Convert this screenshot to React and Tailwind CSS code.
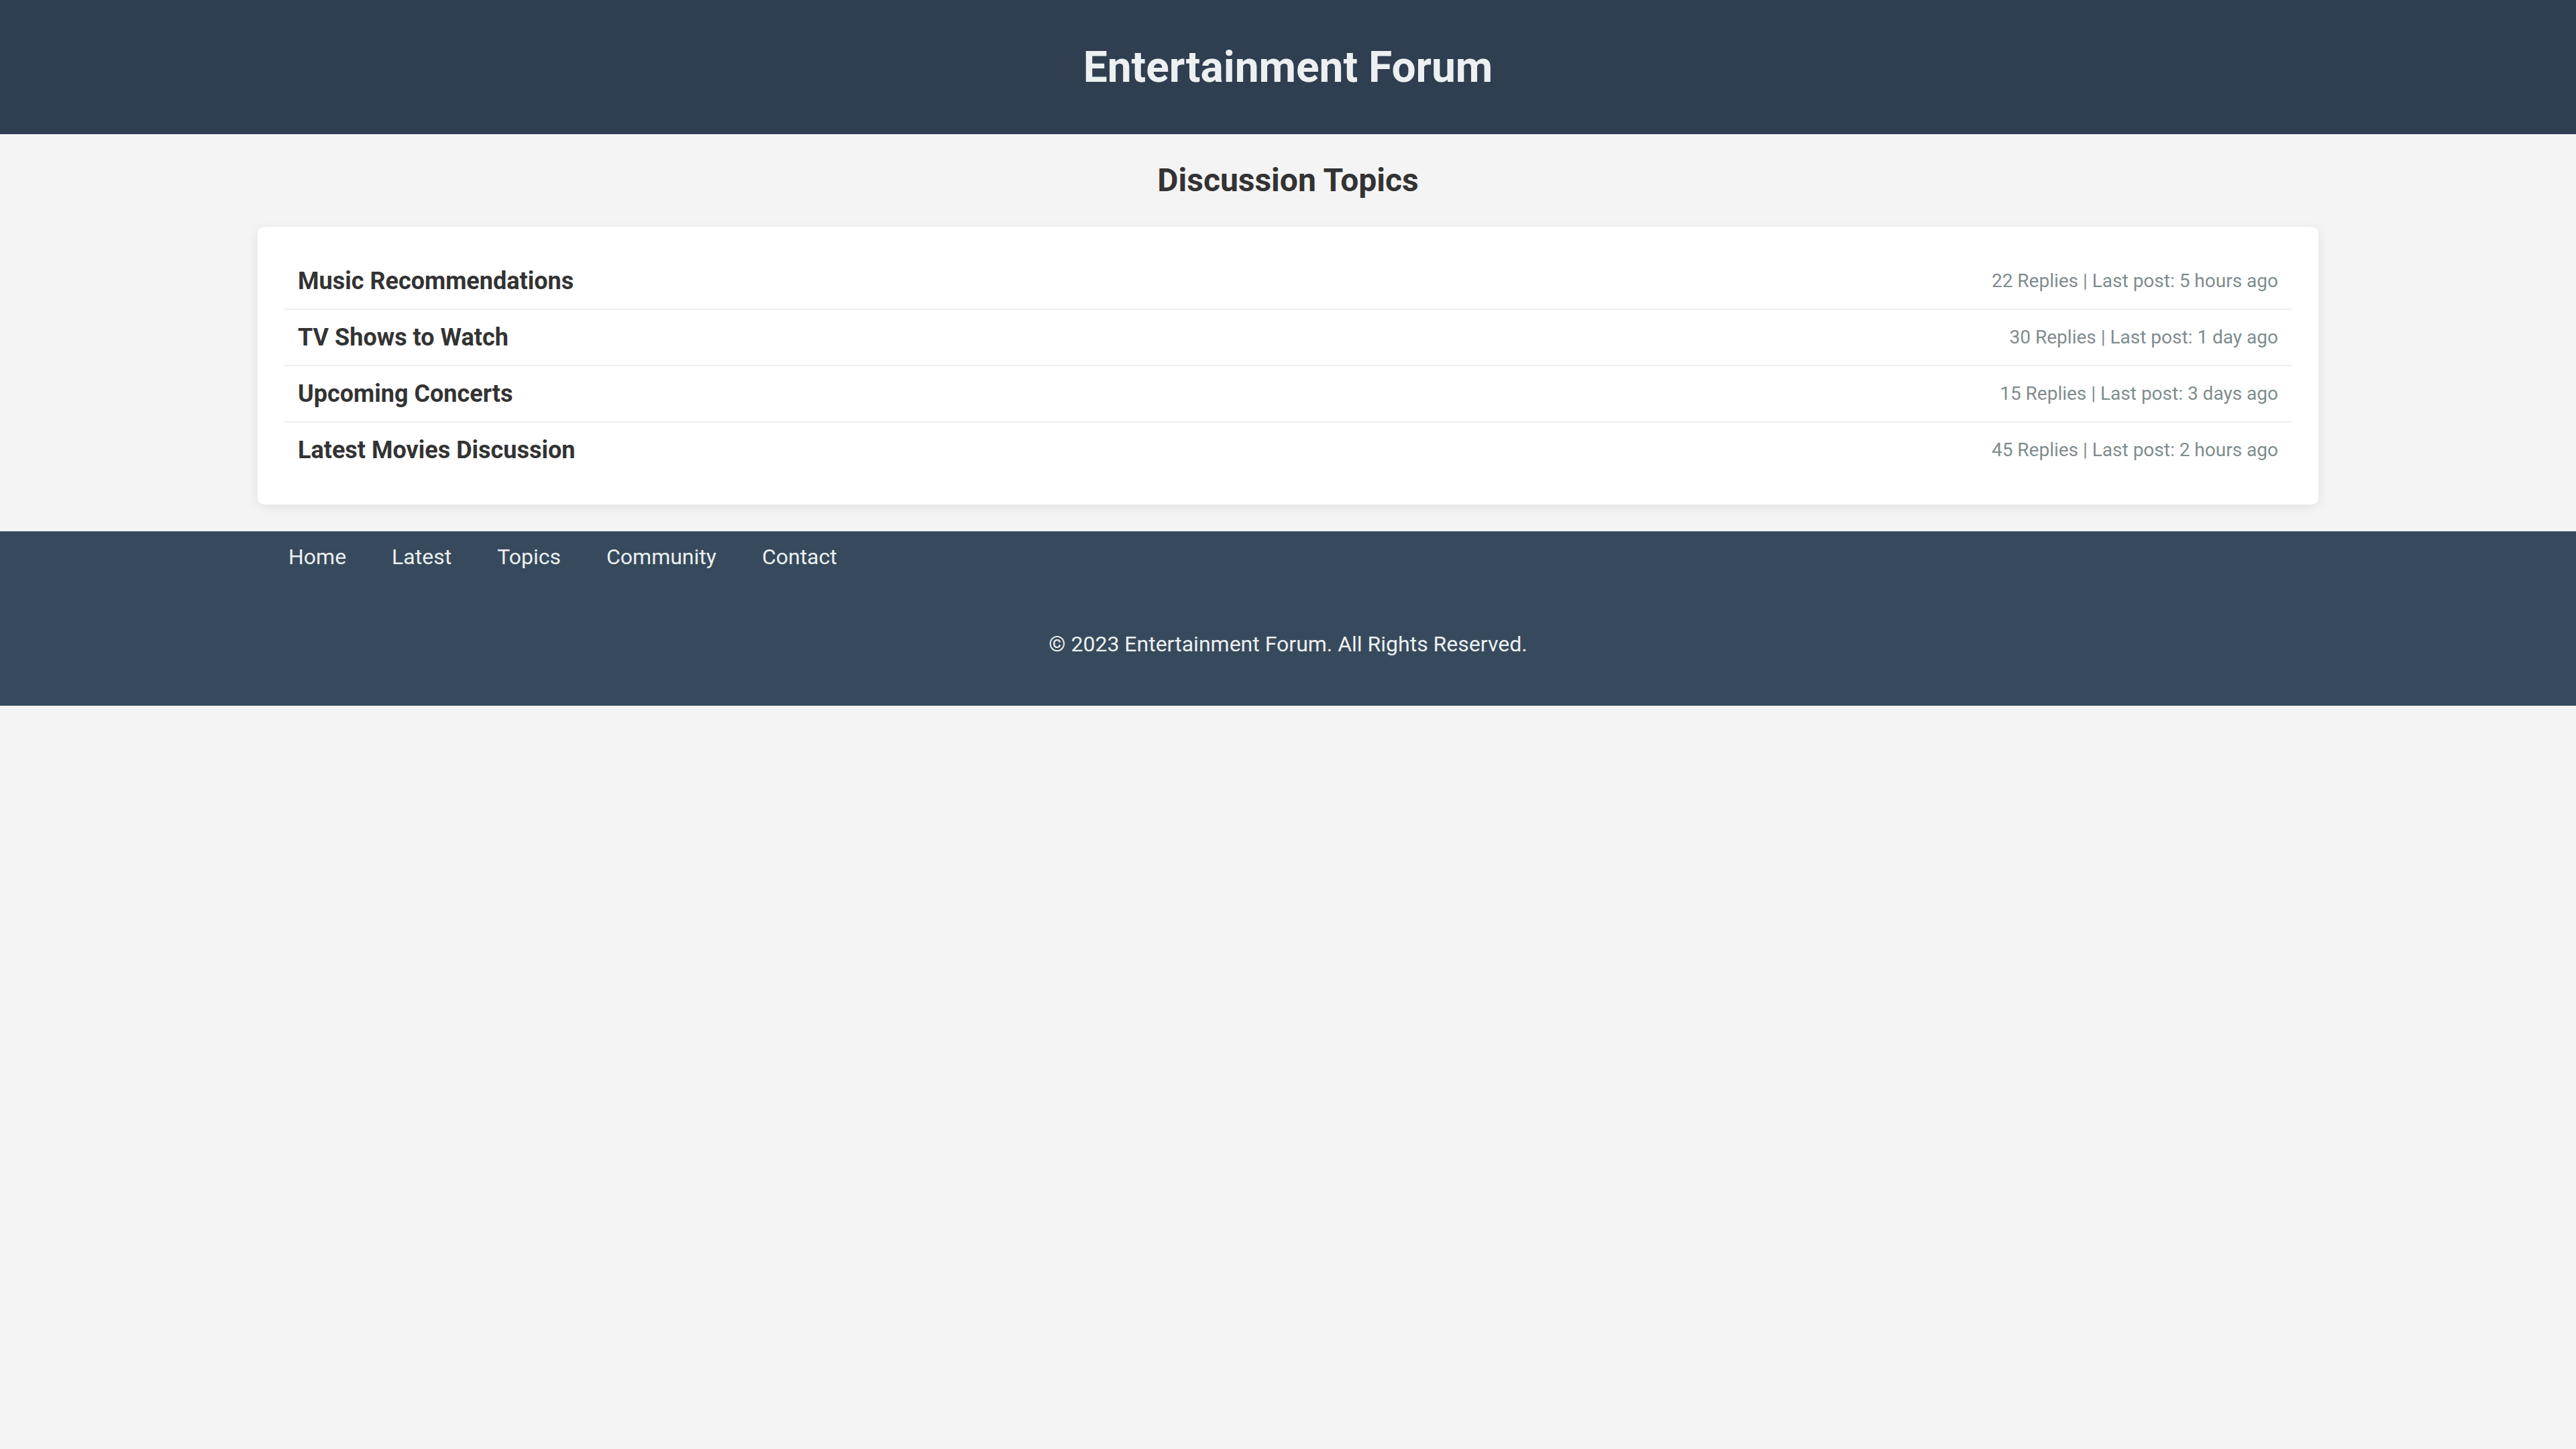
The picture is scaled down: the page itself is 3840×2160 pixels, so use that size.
export default function App() {
  const topics = [
    { title: "Music Recommendations", meta: "22 Replies | Last post: 5 hours ago" },
    { title: "TV Shows to Watch", meta: "30 Replies | Last post: 1 day ago" },
    { title: "Upcoming Concerts", meta: "15 Replies | Last post: 3 days ago" },
    { title: "Latest Movies Discussion", meta: "45 Replies | Last post: 2 hours ago" },
  ];
  const links = ["Home", "Latest", "Topics", "Community", "Contact"];
  return (
    <div className="min-h-[2160px] bg-[#f4f4f4] font-['Roboto',sans-serif]">
      <header className="h-[200px] bg-[#2f3e50] flex items-center justify-center">
        <h1 className="text-[64px] leading-[75px] font-bold text-[#ecf0f1]">Entertainment Forum</h1>
      </header>
      <main className="pt-[41px] pb-[40px]">
        <h2 className="text-[48px] leading-[56px] font-bold text-[#333333] text-center mb-[41px]">Discussion Topics</h2>
        <div className="w-[3072px] mx-auto bg-white rounded-[10px] shadow-[0_4px_16px_rgba(0,0,0,0.08)] p-[40px]">
          {topics.map((t, i) => (
            <div
              key={t.title}
              className={`flex items-center justify-between px-[20px] py-[20px] ${i < topics.length - 1 ? "border-b-2 border-[#eeeeee]" : ""}`}
            >
              <span className="text-[36px] leading-[42px] font-bold text-[#333333]">{t.title}</span>
              <span className="text-[28px] leading-[42px] text-[#7f8c8d]">{t.meta}</span>
            </div>
          ))}
        </div>
      </main>
      <footer className="h-[260px] bg-[#374a5d] pt-[20px]">
        <nav className="w-[3072px] mx-auto pl-[46px] flex gap-[68px]">
          {links.map((l) => (
            <a key={l} className="text-[32px] leading-[37px] text-[#ecf0f1]">{l}</a>
          ))}
        </nav>
        <p className="mt-[93px] text-center text-[32px] leading-[37px] text-[#ecf0f1]">© 2023 Entertainment Forum. All Rights Reserved.</p>
      </footer>
    </div>
  );
}
